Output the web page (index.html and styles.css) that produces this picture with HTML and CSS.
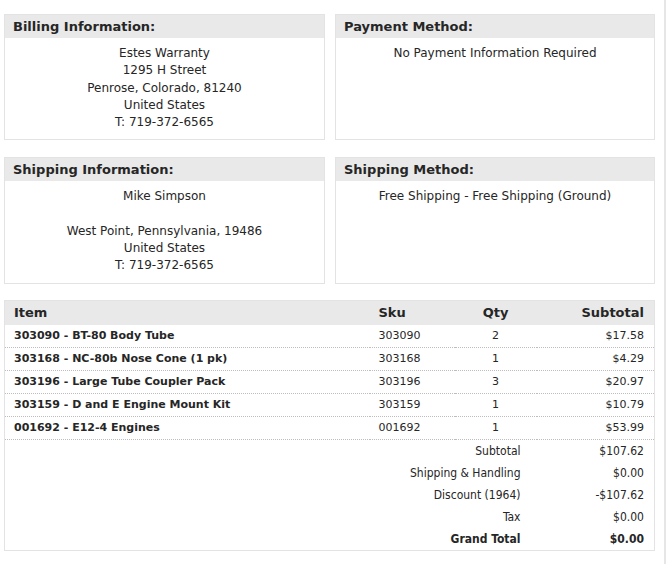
FILE: index.html
```html
<!DOCTYPE html>
<html>
<head>
<meta charset="utf-8">
<link rel="stylesheet" href="styles.css">
</head>
<body>
<div class="page">
  <div class="grid">
    <section class="box">
      <h2 class="box-title">Billing Information:</h2>
      <div class="box-body">
        Estes Warranty<br>1295 H Street<br>Penrose, Colorado, 81240<br>United States<br>T: 719-372-6565
      </div>
    </section>
    <section class="box">
      <h2 class="box-title">Payment Method:</h2>
      <div class="box-body">No Payment Information Required</div>
    </section>
    <section class="box">
      <h2 class="box-title">Shipping Information:</h2>
      <div class="box-body">
        Mike Simpson<br><br>West Point, Pennsylvania, 19486<br>United States<br>T: 719-372-6565
      </div>
    </section>
    <section class="box">
      <h2 class="box-title">Shipping Method:</h2>
      <div class="box-body">Free Shipping - Free Shipping (Ground)</div>
    </section>
  </div>

  <table class="items">
    <colgroup>
      <col class="w-item"><col class="w-sku"><col class="w-qty"><col class="w-sub">
    </colgroup>
    <thead>
      <tr><th class="c-item">Item</th><th class="c-sku">Sku</th><th class="c-qty">Qty</th><th class="c-sub">Subtotal</th></tr>
    </thead>
    <tbody>
      <tr><td class="c-item">303090 - BT-80 Body Tube</td><td class="c-sku">303090</td><td class="c-qty">2</td><td class="c-sub">$17.58</td></tr>
      <tr><td class="c-item">303168 - NC-80b Nose Cone (1 pk)</td><td class="c-sku">303168</td><td class="c-qty">1</td><td class="c-sub">$4.29</td></tr>
      <tr><td class="c-item">303196 - Large Tube Coupler Pack</td><td class="c-sku">303196</td><td class="c-qty">3</td><td class="c-sub">$20.97</td></tr>
      <tr><td class="c-item">303159 - D and E Engine Mount Kit</td><td class="c-sku">303159</td><td class="c-qty">1</td><td class="c-sub">$10.79</td></tr>
      <tr><td class="c-item">001692 - E12-4 Engines</td><td class="c-sku">001692</td><td class="c-qty">1</td><td class="c-sub">$53.99</td></tr>
    </tbody>
    <tfoot>
      <tr><td colspan="3" class="t-label">Subtotal</td><td class="t-val">$107.62</td></tr>
      <tr><td colspan="3" class="t-label">Shipping &amp; Handling</td><td class="t-val">$0.00</td></tr>
      <tr><td colspan="3" class="t-label">Discount (1964)</td><td class="t-val">-$107.62</td></tr>
      <tr><td colspan="3" class="t-label">Tax</td><td class="t-val">$0.00</td></tr>
      <tr class="grand"><td colspan="3" class="t-label">Grand Total</td><td class="t-val">$0.00</td></tr>
    </tfoot>
  </table>
</div>
</body>
</html>
```
FILE: styles.css
```css
html, body {
  margin: 0;
  padding: 0;
  background: #fff;
}
body {
  font-family: "DejaVu Sans", Verdana, sans-serif;
  color: #262626;
}
.page {
  width: 666px;
  min-height: 564px;
  box-sizing: border-box;
  padding: 14px 0 0 4px;
  border-right: 2px solid #e6e6e6;
}
.grid {
  display: grid;
  grid-template-columns: 321px 320px;
  column-gap: 10px;
  row-gap: 17px;
  width: 651px;
}
.box {
  border: 1px solid #e3e3e3;
  display: flex;
  flex-direction: column;
}
.box-title {
  margin: 0;
  height: 23px;
  line-height: 23px;
  background: #e9e9e9;
  font-size: 13px;
  font-weight: bold;
  padding: 0 8px;
  color: #262626;
}
.box-body {
  font-size: 12px;
  line-height: 17.25px;
  text-align: center;
  padding: 7px 8px 8px;
  flex: 1;
}
.items {
  margin-top: 16px;
  width: 651px;
  table-layout: fixed;
  border-collapse: collapse;
  border: 1px solid #e3e3e3;
  font-size: 11px;
}
.w-item { width: 365px; }
.w-sku { width: 85px; }
.w-qty { width: 82px; }
.w-sub { width: 118px; }
.items th {
  background: #e9e9e9;
  font-size: 13px;
  font-weight: bold;
  height: 24px;
  padding: 0 9px;
  text-align: left;
}
.items tbody td {
  height: 22px;
  padding: 0 9px;
  border-bottom: 1px dotted #bdbdbd;
}
.items tbody td.c-item {
  font-weight: bold;
}
.items .c-qty { text-align: center; }
.items .c-sub { text-align: right; padding-right: 10px; }
.items tfoot td {
  height: 22px;
  padding: 0;
  font-size: 12px;
  font-family: "DejaVu Sans Condensed", "DejaVu Sans", sans-serif;
}
.items tfoot tr.grand td { font-weight: bold; }
.items .t-label { text-align: right; padding-right: 16px; }
.items .t-val { text-align: right; padding-right: 10px; }
```
